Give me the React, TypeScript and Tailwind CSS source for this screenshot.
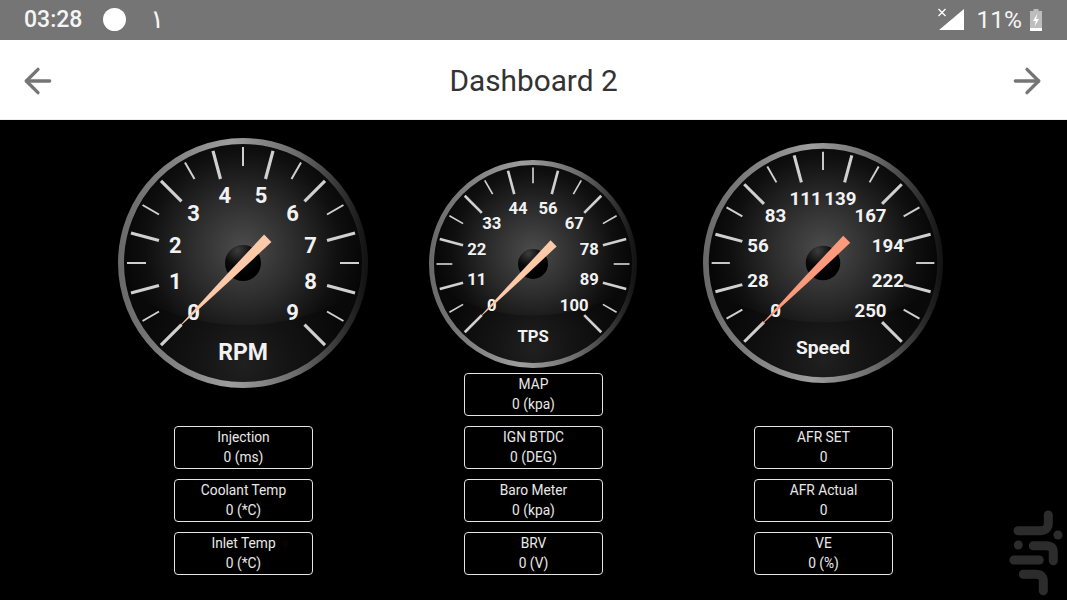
import { ArrowLeft, ArrowRight } from "lucide-react";

const majorAngles = [-135, -105, -75, -45, -15, 15, 45, 75, 105, 135];
const minorAngles = [-120, -90, -60, -30, 0, 30, 60, 90, 120];

const gauges = [
  {
    id: "rpm",
    title: "RPM",
    labels: ["0", "1", "2", "3", "4", "5", "6", "7", "8", "9"],
    size: 250,
    top: "pt-[18px]",
    gap: "mt-[38px]",
    fontSize: 22,
    titleSize: 23,
    titleY: 96.5,
    needle: "#fcc9a9",
    boxes: [
      ["Injection", "0 (ms)"],
      ["Coolant Temp", "0 (*C)"],
      ["Inlet Temp", "0 (*C)"],
    ],
  },
  {
    id: "tps",
    title: "TPS",
    labels: ["0", "11", "22", "33", "44", "56", "67", "78", "89", "100"],
    size: 208,
    top: "pt-[40px]",
    gap: "mt-[5px]",
    fontSize: 20,
    titleSize: 20,
    titleY: 94,
    needle: "#fcc9a9",
    boxes: [
      ["MAP", "0 (kpa)"],
      ["IGN BTDC", "0 (DEG)"],
      ["Baro Meter", "0 (kpa)"],
      ["BRV", "0 (V)"],
    ],
  },
  {
    id: "speed",
    title: "Speed",
    labels: ["0", "28", "56", "83", "111", "139", "167", "194", "222", "250"],
    size: 240,
    top: "pt-[23px]",
    gap: "mt-[43px]",
    fontSize: 19.5,
    titleSize: 20,
    titleY: 95,
    needle: "#fb9a7c",
    boxes: [
      ["AFR SET", "0"],
      ["AFR Actual", "0"],
      ["VE", "0 (%)"],
    ],
  },
];

type GaugeProps = (typeof gauges)[number];

function polar(angle: number, r: number) {
  const rad = (angle * Math.PI) / 180;
  return { x: Math.sin(rad) * r, y: -Math.cos(rad) * r };
}

function Gauge({ id, title, labels, size, fontSize, titleSize, titleY, needle }: GaugeProps) {
  return (
    <svg
      viewBox="-125 -125 250 250"
      width={size}
      height={size}
      className="block shrink-0 mr-[1px] font-['Roboto',sans-serif]"
    >
      <defs>
        <radialGradient id={`${id}-face`} cx="50%" cy="44%" r="52%">
          <stop offset="0%" stopColor="#4c4c4c" />
          <stop offset="45%" stopColor="#2a2a2a" />
          <stop offset="78%" stopColor="#0f0f0f" />
          <stop offset="100%" stopColor="#050505" />
        </radialGradient>
        <radialGradient id={`${id}-low`} gradientUnits="userSpaceOnUse" cx="0" cy="100" r="100">
          <stop offset="0%" stopColor="#202020" />
          <stop offset="45%" stopColor="#141414" />
          <stop offset="100%" stopColor="#090909" />
        </radialGradient>
        <linearGradient id={`${id}-rim`} x1="0" y1="0" x2="1" y2="0">
          <stop offset="0%" stopColor="#6a6a6a" />
          <stop offset="45%" stopColor="#9e9e9e" />
          <stop offset="72%" stopColor="#6c6c6c" />
          <stop offset="100%" stopColor="#141414" />
        </linearGradient>
        <radialGradient id={`${id}-hub`} cx="35%" cy="15%" r="75%">
          <stop offset="0%" stopColor="#3c3c3c" />
          <stop offset="55%" stopColor="#0a0a0a" />
          <stop offset="100%" stopColor="#000000" />
        </radialGradient>
        <clipPath id={`${id}-clip`}>
          <circle r="119" />
        </clipPath>
      </defs>

      <circle r="119" fill={`url(#${id}-face)`} />
      {/* darker lower part of the dial */}
      <path
        d="M-125 22 A215 215 0 0 0 125 22 V125 H-125 Z"
        fill={`url(#${id}-low)`}
        clipPath={`url(#${id}-clip)`}
      />
      <circle r="122" fill="none" stroke={`url(#${id}-rim)`} strokeWidth="6" />

      {majorAngles.map((a) => {
        const p1 = polar(a, 87);
        const p2 = polar(a, 116);
        return (
          <line key={a} x1={p1.x} y1={p1.y} x2={p2.x} y2={p2.y} stroke="#d0d0d0" strokeWidth="3.2" />
        );
      })}
      {minorAngles.map((a) => {
        const p1 = polar(a, 97);
        const p2 = polar(a, 116);
        return (
          <line key={a} x1={p1.x} y1={p1.y} x2={p2.x} y2={p2.y} stroke="#d0d0d0" strokeWidth="2" />
        );
      })}

      {labels.map((label, i) => {
        const p = polar(majorAngles[i], 70);
        return (
          <text
            key={label}
            x={p.x}
            y={p.y + fontSize * 0.36}
            textAnchor="middle"
            fontSize={fontSize}
            fontWeight="700"
            fill="#f2f2f2"
          >
            {label}
          </text>
        );
      })}
      <text y={titleY} textAnchor="middle" fontSize={titleSize} fontWeight="700" fill="#f2f2f2">
        {title}
      </text>

      <circle r="18" fill={`url(#${id}-hub)`} />
      <polygon points="-97,0 -20,-3.4 35,-5.2 35,5.2 -20,3.4" fill={needle} transform="rotate(-45)" />
    </svg>
  );
}

function InfoBox({ label, value }: { label: string; value: string }) {
  return (
    <div className="w-[139px] h-[43px] border border-[#e4e4e4] rounded-[4px] bg-black flex flex-col items-center justify-center text-[13.75px] leading-[19.5px] text-[#e8e8e8]">
      <span>{label}</span>
      <span>{value}</span>
    </div>
  );
}

export default function App() {
  return (
    <div className="relative w-full h-[600px] overflow-hidden bg-black font-['Roboto',sans-serif]">
      {/* Status bar */}
      <div className="h-10 bg-[#757575] flex items-center justify-between pl-6 pr-6 text-[#f5f5f5]">
        <div className="flex items-center">
          <span className="text-[23px] font-medium">03:28</span>
          <div className="ml-[21px] w-[23px] h-[23px] rounded-full bg-white -mt-[1px]" />
          <span className="ml-[24px] -mt-[2px] text-[26px] leading-none font-['DejaVu_Sans',sans-serif]">١</span>
        </div>
        <div className="flex items-center">
          <svg width="28" height="24" viewBox="0 0 28 24" className="block">
            <path d="M2 22 L27 1 V22 Z" fill="#ffffff" />
            <path d="M1.5 1 L8.5 8 M8.5 1 L1.5 8" stroke="#ffffff" strokeWidth="1.3" fill="none" />
          </svg>
          <span className="ml-[12px] text-[24.5px]">11%</span>
          <svg width="14" height="24" viewBox="0 0 14 24" className="block ml-[7px]">
            <path d="M4.5 1 H9.5 V3 H13 V23 H1 V3 H4.5 Z" fill="#bdbdbd" />
            <path d="M1 20 H13 V23 H1 Z" fill="#ffffff" />
            <path d="M8.5 5.5 L4 13 H6.8 L5.5 18.5 L10 11 H7.2 Z" fill="#ffffff" />
          </svg>
        </div>
      </div>

      {/* Title bar */}
      <div className="h-20 pt-[2px] bg-white border-b border-[#eeeeee] flex items-center justify-between pl-[18px] pr-[20px]">
        <ArrowLeft size={40} strokeWidth={2} color="#757575" />
        <h1 className="text-[29.8px] mt-[2px] ml-[2px] text-[#333333]">Dashboard 2</h1>
        <ArrowRight size={40} strokeWidth={2} color="#757575" />
      </div>

      {/* Gauges */}
      <div className="flex justify-center">
        {gauges.map((gauge) => (
          <div key={gauge.id} className={`w-[290px] flex flex-col items-center ${gauge.top}`}>
            <Gauge {...gauge} />
            <div className={`flex flex-col gap-[10px] ${gauge.gap}`}>
              {gauge.boxes.map(([label, value]) => (
                <InfoBox key={label} label={label} value={value} />
              ))}
            </div>
          </div>
        ))}
      </div>

      {/* Watermark logo */}
      <svg
        width="77"
        height="100"
        viewBox="990 500 77 100"
        className="absolute right-0 bottom-0"
        fill="none"
        stroke="#2c2c2c"
        strokeWidth="9"
        strokeLinecap="round"
      >
        <path d="M1048.3 515 V523 Q1048.3 530.7 1040 530.7 H1018" />
        <path d="M1033.3 545.7 H1046 Q1053.3 545.7 1053.3 552 V560.7" />
        <path d="M1014 560 H1039.3" />
        <path d="M1023.3 574.3 H1036 Q1043.3 574.3 1043.3 581 V590.7" />
        <circle cx="1058" cy="535" r="4.5" fill="#2c2c2c" stroke="none" />
        <circle cx="1018.3" cy="545" r="4.5" fill="#2c2c2c" stroke="none" />
      </svg>
    </div>
  );
}
